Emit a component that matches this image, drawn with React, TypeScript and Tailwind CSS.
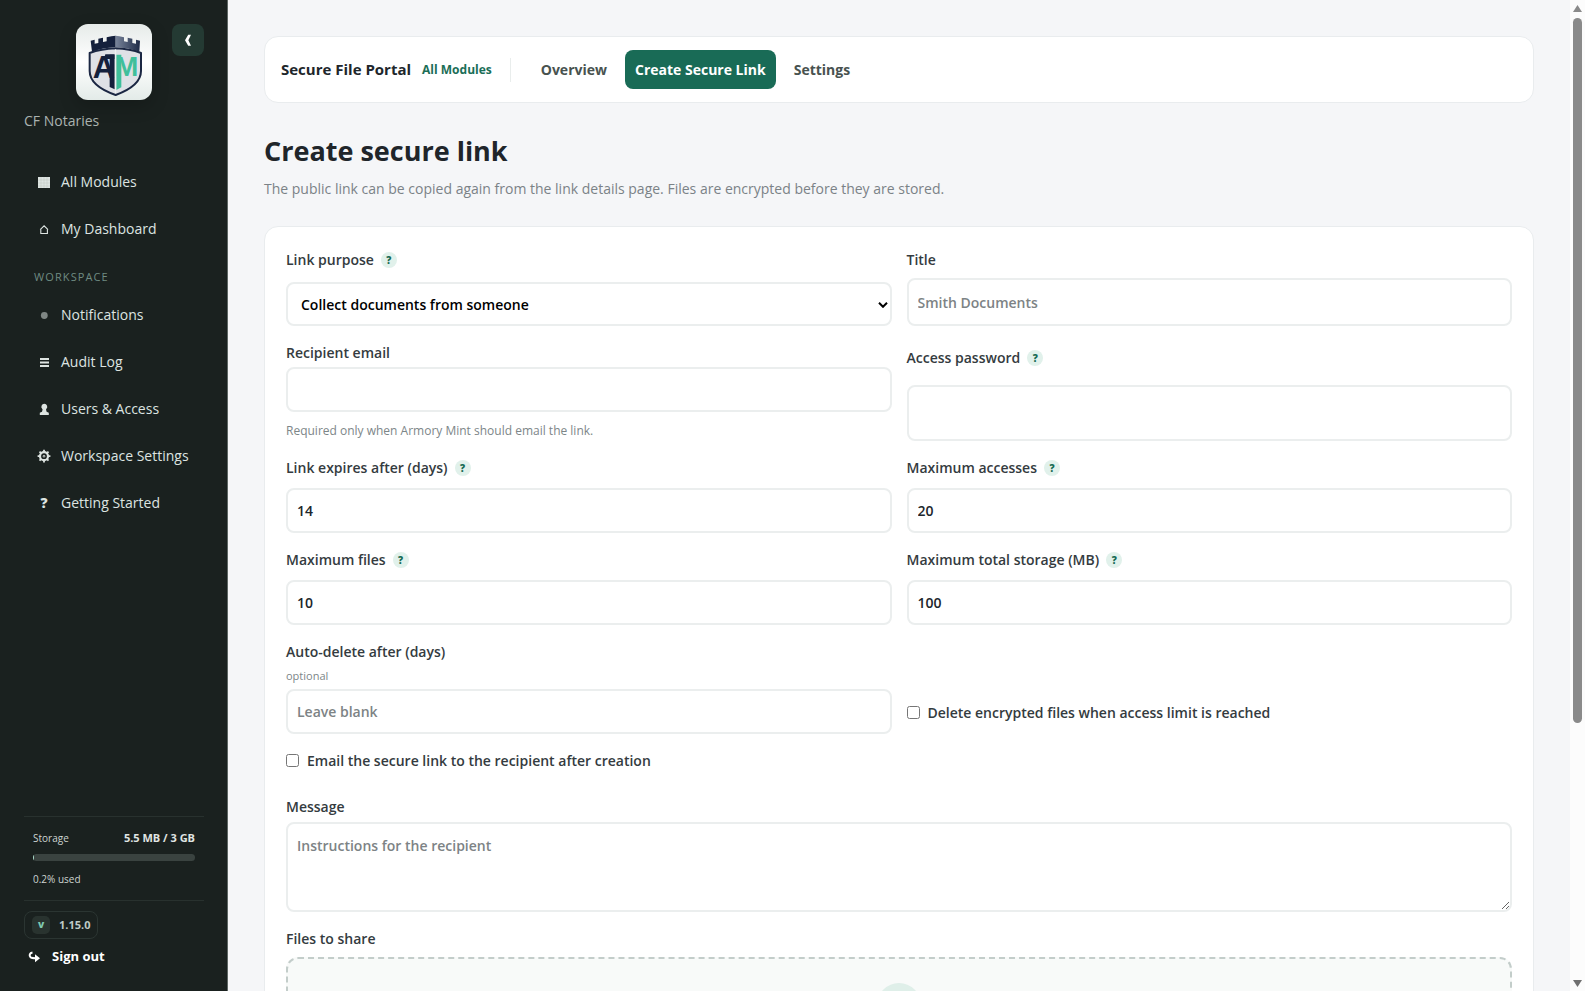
import type { ReactNode } from "react";

const control =
  "w-full rounded-lg border-2 border-[#ebeeee] bg-white px-[9px] text-[14px] font-semibold text-[#20262b] placeholder:text-[#7d8385] placeholder:opacity-100";

function Label({ htmlFor, children, help }: { htmlFor: string; children: ReactNode; help?: boolean }) {
  return (
    <div className="flex h-[22px] items-center gap-[7px]">
      <label htmlFor={htmlFor} className="text-[14px] leading-[22px] font-semibold text-[#343b40]">
        {children}
      </label>
      {help && (
        <button
          type="button"
          aria-label="Help"
          className="flex size-4 items-center justify-center rounded-full bg-[#e1f1eb] text-[10px] leading-4 font-extrabold text-[#176b54]"
        >
          ?
        </button>
      )}
    </div>
  );
}

function NumberField({ id, label, value }: { id: string; label: string; value: string }) {
  return (
    <div className="flex flex-col gap-[9px]">
      <Label htmlFor={id} help>
        {label}
      </Label>
      <input id={id} defaultValue={value} className={`${control} h-[45px]`} />
    </div>
  );
}

function Logo() {
  return (
    <svg viewBox="0 0 228 228" className="size-19" role="img" aria-label="Armory Mint">
      <defs>
        <linearGradient id="plate" x1="0" y1="0" x2="0" y2="1">
          <stop offset="0" stopColor="#e6ebe9" />
          <stop offset="0.5" stopColor="#ffffff" />
          <stop offset="1" stopColor="#e3ebe8" />
        </linearGradient>
        <linearGradient id="tower" x1="0" y1="0" x2="1" y2="0">
          <stop offset="0" stopColor="#78849a" />
          <stop offset="1" stopColor="#1d2a46" />
        </linearGradient>
      </defs>
      <rect width="228" height="228" rx="36" fill="url(#plate)" />
      <path d="M44 50l12-3v12l11-2V44l14-3v13l11-2V40l14-3 13-2v34C92 71 70 75 48 83z" fill="#14203c" />
      <path d="M192 50l-12-3v12l-11-2V44l-14-3v13l-11-2V40l-14-3-11-2v34c27 2 49 6 71 14z" fill="url(#tower)" />
      <path
        d="M41 87c25-9 50-13 78-14 28 1 52 5 76 14v54c0 36-38 58-76 72-40-14-78-36-78-72z"
        fill="#dfe1e6"
        stroke="#1b2743"
        strokeWidth="6"
        strokeLinejoin="round"
      />
      <path d="M88 91h28v14H84z" fill="#14203c" />
      <path d="M101 92h15v104l-15-7z" fill="#14203c" />
      <path d="M121 92h15v98l-15 8z" fill="#3fbf9b" />
      <g fontFamily="Liberation Sans, sans-serif" fontWeight="700">
        <text x="50" y="161" fontSize="92" fill="#14203c">A</text>
        <text x="117" y="157" fontSize="84" fill="#3fbf9b">M</text>
      </g>
      <path d="M118.500 76v132" stroke="#eef1f2" strokeWidth="4" />
    </svg>
  );
}

const icons: Record<string, ReactNode> = {
  grid: (
    <g>
      <rect x="1" y="2" width="12" height="11" fill="currentColor" />
      <path d="M4 2v11M7 2v11M10 2v11M1 5h12M1 8h12M1 11h12" stroke="#a9b3af" strokeWidth="0.3" />
    </g>
  ),
  home: <path d="M3.800 7v4.500h6.600V7M3.200 7.600l3.900-3.800L11 7.600" fill="none" stroke="currentColor" strokeWidth="1.100" />,
  dot: <circle cx="7.300" cy="7.500" r="3.400" fill="#7f8784" />,
  lines: <path d="M3 4h9M3 7.500h9M3 11h9" stroke="currentColor" strokeWidth="2" />,
  pawn: (
    <path d="M7.300 1.800a3 3 0 012 5.200L9 7.400l.6 2.400 2.200 1V13H2.800v-2.200l2.200-1 .6-2.400-.3-.4a3 3 0 012-5.200z" fill="currentColor" />
  ),
  gear: (
    <g fill="none" stroke="currentColor">
      <circle cx="7" cy="7.200" r="4" strokeWidth="2.200" />
      <circle cx="7" cy="7.200" r="0.900" strokeWidth="0.900" />
      <path
        d="M7 .8v2M7 11.600v2M.6 7.200h2M11.400 7.200h2M2.500 2.700L4 4.200M10 10.200l1.500 1.500M11.500 2.700L10 4.200M4 10.200l-1.500 1.500"
        strokeWidth="1.800"
      />
    </g>
  ),
};

function NavItem({ icon, label }: { icon: string; label: string }) {
  return (
    <a href="#" className="flex h-[47px] items-center gap-[10px] pl-[13px] text-[14px] text-[#dde4e1]">
      {icon === "question" ? (
        <span className="w-[14px] text-center text-[14px] font-extrabold">?</span>
      ) : (
        <svg viewBox="0 0 14 14" className="size-[14px] shrink-0" aria-hidden="true">
          {icons[icon]}
        </svg>
      )}
      {label}
    </a>
  );
}

function Sidebar() {
  return (
    <aside className="flex w-[228px] shrink-0 flex-col border-r border-[#5d6663] bg-[#1a211f] pr-[23px] pb-6 pl-6">
      <div className="relative flex justify-center pt-6">
        <div className="rounded-xl shadow-[0_6px_18px_rgba(0,0,0,0.2)]">
          <Logo />
        </div>
        <button
          type="button"
          aria-label="Collapse sidebar"
          className="absolute top-6 right-0 flex size-8 items-center justify-center rounded-lg bg-[#243a33] text-white"
        >
          <svg viewBox="0 0 12 12" className="size-3" aria-hidden="true">
            <path d="M9 .8H6.200L3 6.300l3.200 5.500H9L6.400 6.300z" fill="currentColor" />
          </svg>
        </button>
      </div>
      <p className="mt-[11px] text-[14px] leading-5 text-[#aab3b0]">CF Notaries</p>
      <nav className="mt-[27px]">
        <NavItem icon="grid" label="All Modules" />
        <NavItem icon="home" label="My Dashboard" />
        <p className="mt-[17px] pl-[10px] text-[11px] leading-4 tracking-widest text-[#6f8b82]">WORKSPACE</p>
        <div className="mt-[6px]">
          <NavItem icon="dot" label="Notifications" />
          <NavItem icon="lines" label="Audit Log" />
          <NavItem icon="pawn" label="Users & Access" />
          <NavItem icon="gear" label="Workspace Settings" />
          <NavItem icon="question" label="Getting Started" />
        </div>
      </nav>
      <div className="mt-auto flex flex-col border-y border-[#28312e] px-[9px] pt-[11px] pb-[11px] text-[10px] text-[#cdd4d1]">
        <div className="flex h-5 items-center justify-between">
          <span>Storage</span>
          <strong className="text-[11px] font-bold text-[#e0e5e3]">5.5 MB / 3 GB</strong>
        </div>
        <div className="mt-[6px] h-[7px] overflow-hidden rounded-full bg-[#3a4340]">
          <div className="h-full w-px bg-[#a9d9c8]" />
        </div>
        <p className="mt-2 h-5 leading-5">0.2% used</p>
      </div>
      <div className="mt-[10px] flex h-7 items-center gap-[9px] self-start rounded-lg border border-[#2b3532] px-[7px] text-[11px] font-bold text-[#bfcac6]">
        <span className="flex size-[18px] items-center justify-center rounded-[5px] bg-[#29332f] text-[9px] font-extrabold text-[#7fc9b0]">
          V
        </span>
        1.15.0
      </div>
      <button type="button" className="mt-2 flex h-5 items-center gap-3 pl-1 text-[13px] font-bold text-white">
        <svg viewBox="0 0 12 12" className="size-3" aria-hidden="true">
          <path d="M4.500 1.500C1.500 2 1 4.500 2.500 6.200 3.300 7 4.500 7.300 8 7.300" fill="none" stroke="currentColor" strokeWidth="2" />
          <path d="M7 3.300L12 7.300 7 11.300z" fill="currentColor" />
        </svg>
        Sign out
      </button>
    </aside>
  );
}

export default function App() {
  return (
    <div className="flex h-screen overflow-hidden bg-[#f5f6f8] font-['Open_Sans','Noto_Sans',sans-serif]">
      <Sidebar />
      <main className="min-w-0 flex-1 overflow-y-auto px-9 pt-9 pb-9 [scrollbar-width:none]">
        <header className="flex h-[67px] items-center rounded-[14px] border border-[#e9ecee] bg-white px-4">
          <strong className="text-[15px] font-bold text-[#20262b]">Secure File Portal</strong>
          <a href="#" className="ml-[11px] text-[12px] font-bold text-[#1b6e57]">All Modules</a>
          <span className="ml-[18px] h-6 w-px bg-[#e9edec]" />
          <nav className="ml-5 flex items-center gap-2 text-[14px] font-bold text-[#48524f]">
            <a href="#" className="px-[10px]">Overview</a>
            <a href="#" className="flex h-[39px] items-center rounded-lg bg-[#196b56] px-[10px] text-white">
              Create Secure Link
            </a>
            <a href="#" className="px-[10px]">Settings</a>
          </nav>
        </header>

        <h1 className="mt-[30px] text-[27px] leading-9 font-bold text-[#20252a]">Create secure link</h1>
        <p className="mt-[10px] text-[14px] leading-5 text-[#7b8287]">
          The public link can be copied again from the link details page. Files are encrypted before they are stored.
        </p>

        <form className="mt-[27px] grid grid-cols-2 gap-x-[15px] gap-y-4 rounded-[14px] border border-[#e9ecee] bg-white px-[21px] py-[22px]">
          <div className="flex flex-col justify-between">
            <Label htmlFor="purpose" help>Link purpose</Label>
            <div className="relative">
              <select id="purpose" className={`${control} block h-11 appearance-none !px-[13px] !text-black`}>
                <option>Collect documents from someone</option>
              </select>
              <svg viewBox="0 0 10 6" className="pointer-events-none absolute top-5 right-1 h-[6px] w-[10px]" aria-hidden="true">
                <path d="M1 .8l4 4 4-4" fill="none" stroke="#000" strokeWidth="2" />
              </svg>
            </div>
          </div>
          <div className="flex flex-col gap-[7px]">
            <Label htmlFor="title">Title</Label>
            <input id="title" placeholder="Smith Documents" className={`${control} h-12`} />
          </div>

          <div className="flex flex-col">
            <Label htmlFor="email">Recipient email</Label>
            <input id="email" type="email" className={`${control} mt-[3px] h-[45px]`} />
            <p className="mt-2 text-[12px] leading-[21px] text-[#7d8688]">
              Required only when Armory Mint should email the link.
            </p>
          </div>
          <div className="flex flex-col justify-between pt-[5px]">
            <Label htmlFor="password" help>Access password</Label>
            <input id="password" type="password" className={`${control} h-14`} />
          </div>

          <NumberField id="expires" label="Link expires after (days)" value="14" />
          <NumberField id="accesses" label="Maximum accesses" value="20" />
          <NumberField id="files" label="Maximum files" value="10" />
          <NumberField id="storage" label="Maximum total storage (MB)" value="100" />

          <div className="flex flex-col">
            <Label htmlFor="autodelete">Auto-delete after (days)</Label>
            <span className="mt-[3px] text-[11px] leading-5 text-[#7d8688]">optional</span>
            <input id="autodelete" placeholder="Leave blank" className={`${control} mt-[3px] h-[45px]`} />
          </div>
          <label className="flex h-11 items-center gap-2 self-end text-[14px] font-semibold text-[#343b40]">
            <input type="checkbox" className="size-[13px]" />
            Delete encrypted files when access limit is reached
          </label>

          <div className="col-span-2 h-[30px]">
            <label className="flex h-5 items-center gap-2 text-[14px] font-semibold text-[#343b40]">
              <input type="checkbox" className="size-[13px]" />
              Email the secure link to the recipient after creation
            </label>
          </div>

          <div className="col-span-2 flex flex-col gap-1">
            <Label htmlFor="message">Message</Label>
            <textarea
              id="message"
              placeholder="Instructions for the recipient"
              className={`${control} block h-[90px] resize-y py-3 leading-5`}
            />
          </div>

          <div className="col-span-2 flex flex-col gap-[7px]">
            <Label htmlFor="upload">Files to share</Label>
            <label
              htmlFor="upload"
              className="flex h-40 flex-col items-center rounded-xl border-2 border-dashed border-[#c3cdca] bg-[#f8faf9] pt-6"
            >
              <span className="size-11 rounded-full bg-[#dfefe9]" />
              <input id="upload" type="file" multiple className="sr-only" />
            </label>
          </div>
        </form>
      </main>
      <div className="flex w-[15px] shrink-0 flex-col items-center bg-[#fcfcfc] pt-[5px] pb-1" aria-hidden="true">
        <svg viewBox="0 0 9 7" className="h-[7px] w-[9px]">
          <path d="M4.500 0L9 7H0z" fill="#8a8a8a" />
        </svg>
        <div className="mt-[6px] w-[9px] flex-[11] rounded-full bg-[#8a8a8a]" />
        <div className="flex-[4]" />
        <svg viewBox="0 0 9 7" className="h-[7px] w-[9px]">
          <path d="M4.500 7L9 0H0z" fill="#707070" />
        </svg>
      </div>
    </div>
  );
}
